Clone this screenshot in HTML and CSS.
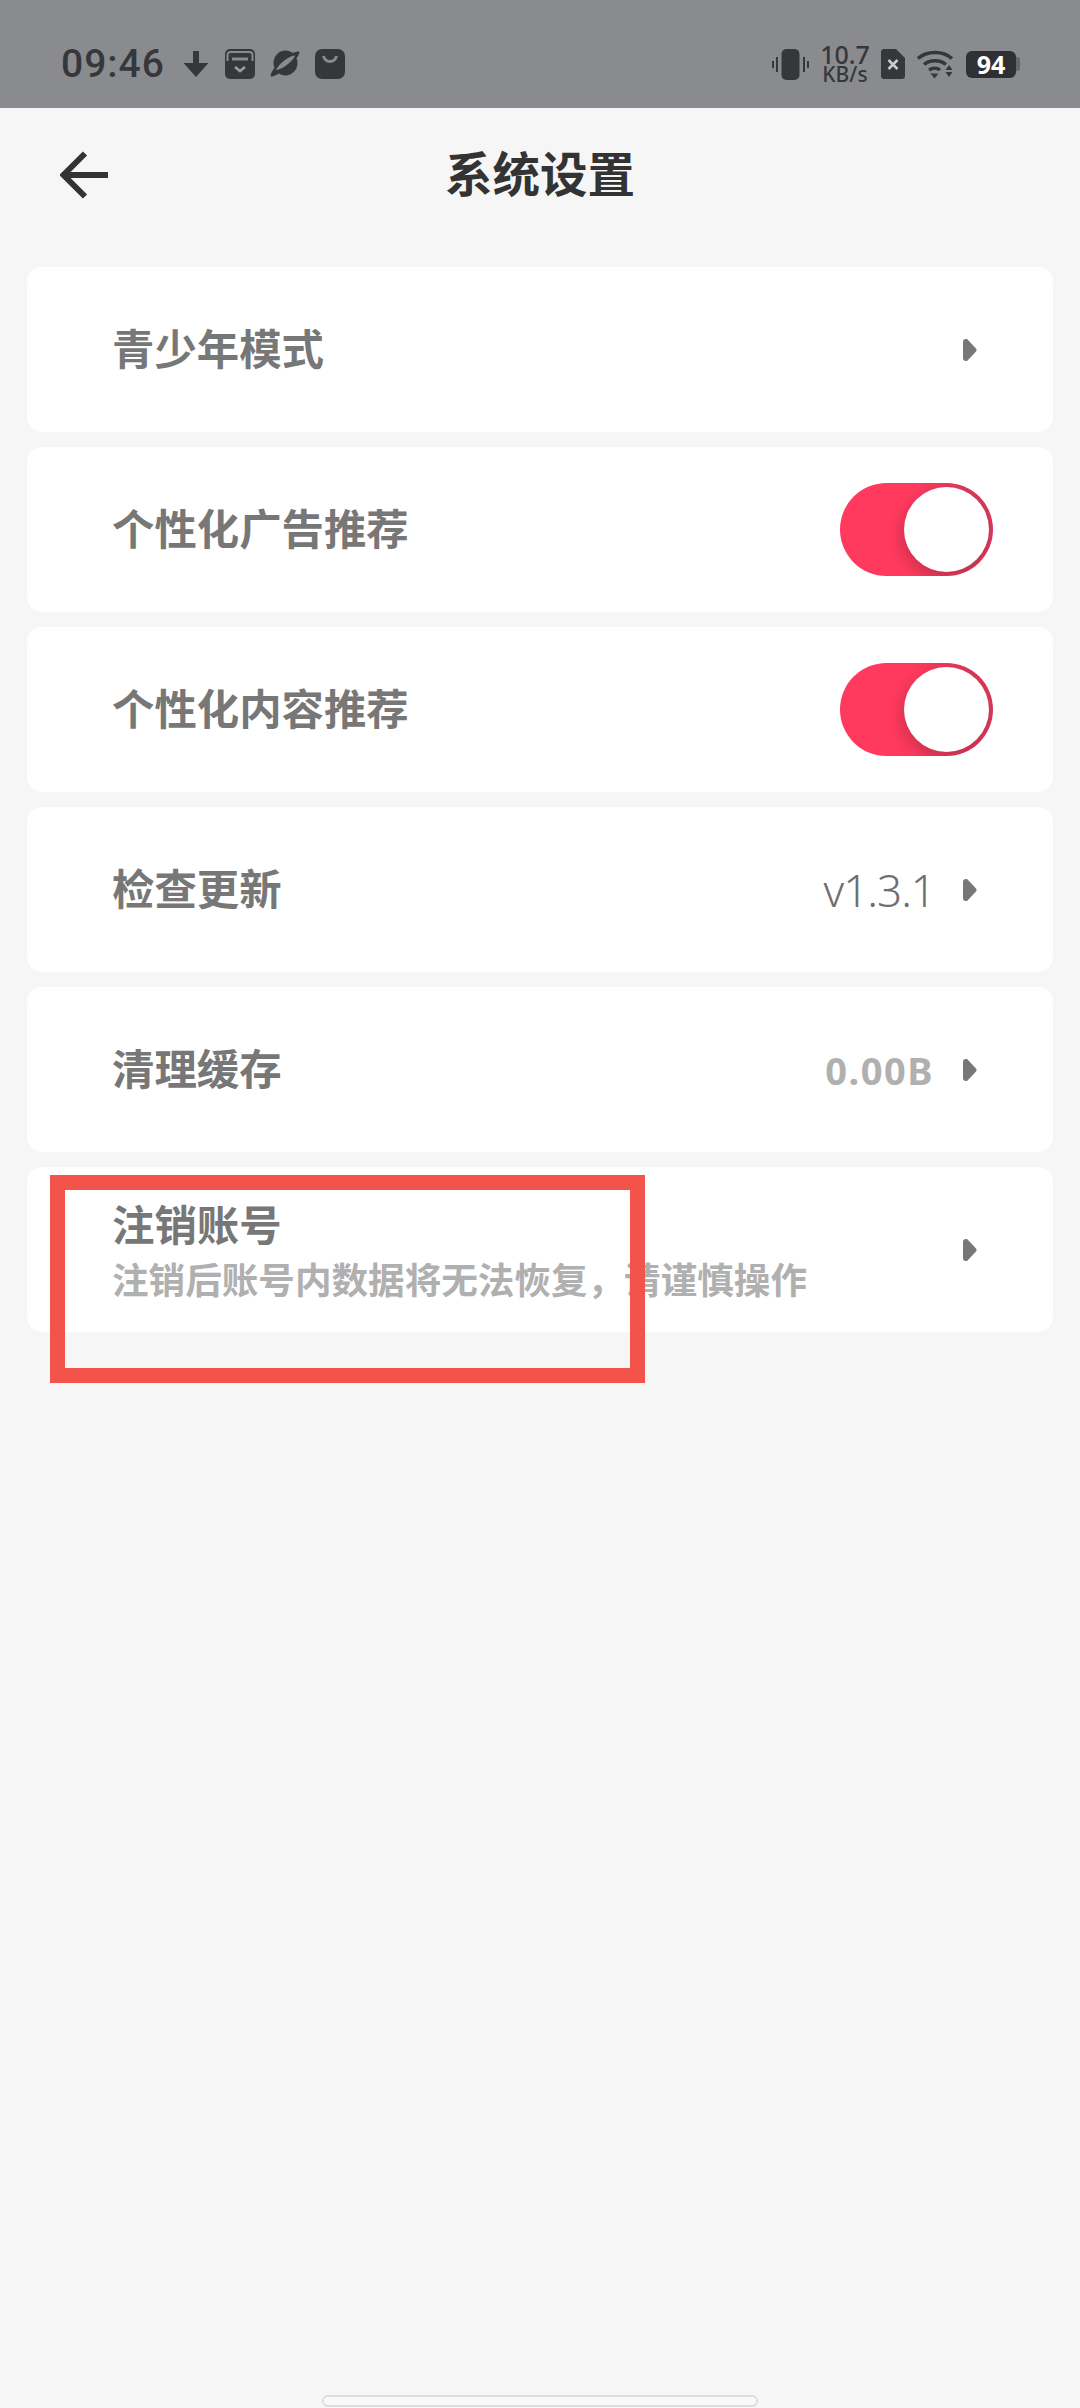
FILE: index.html
```html
<!DOCTYPE html>
<html lang="zh">
<head>
  <meta charset="utf-8">
  <title>系统设置</title>
  <link rel="stylesheet" href="styles.css">
</head>
<body>
  <div class="statusbar">
    <div class="status-left">
      <span class="clock">09:46</span>
      <svg class="ic-down" viewBox="0 0 26 26"><path d="M10 0h6v12h9.500L13 26 .5 12H10z"/></svg>
      <svg class="ic-app" viewBox="0 0 30 30"><rect width="30" height="30" rx="5"/><path d="M2.500 12V6A3 3 0 0 1 5.500 3h19a3 3 0 0 1 3 3v6" fill="none" stroke="#8a8b8f" stroke-width="2"/><path d="M7 8.500h16v3H7z" fill="#8a8b8f"/><path d="M10 18l5 4 5-4" fill="none" stroke="#9a9b9f" stroke-width="2.800"/></svg>
      <svg class="ic-app" viewBox="0 0 30 30"><ellipse cx="15.500" cy="14" rx="12" ry="12.500"/><path d="M1 27.500C-.5 25 4 19 9 14S24 2 29 2.500c1.500 2-3 8-8 13S4 28.500 1 27.500z"/><path d="M6 21C8 16 18 7 25 6.500 24 11 13 20.500 6 21z" fill="#8a8b8f"/></svg>
      <svg class="ic-app" viewBox="0 0 30 30"><path d="M7 0h16a7 7 0 0 1 7 7v16a7 7 0 0 1-7 7H7a7 7 0 0 1-7-7V7a7 7 0 0 1 7-7z"/><path d="M8.500 7c1 4 3.500 5.500 6.500 5.500S20.500 11 21.500 7" fill="none" stroke="#8a8b8f" stroke-width="3"/></svg>
    </div>
    <div class="status-right">
      <svg class="ic-vibrate" viewBox="0 0 37 31"><rect x="9.500" y="0" width="18" height="31" rx="5"/><path d="M5 8v15M1 12v7M32 8v15M36 12v7" fill="none" stroke="#36373b" stroke-width="2"/></svg>
      <div class="netspeed"><span class="net-num">10.7</span><span class="net-unit">KB/s</span></div>
      <svg class="ic-sim" viewBox="0 0 24 30"><path d="M3 0h12l9 9v18a3 3 0 0 1-3 3H3a3 3 0 0 1-3-3V3a3 3 0 0 1 3-3z"/><path d="M7.500 11l9 9M16.500 11l-9 9" stroke="#c9cacc" stroke-width="2.600"/></svg>
      <svg class="ic-wifi" viewBox="0 0 37 29"><path d="M1 8.500C10 .5 26 .5 35 8.500M7 14.500c6-5 16-5 22 0M12 20c3.500-2.500 8-2.500 11 0" fill="none" stroke="#36373b" stroke-width="3.400"/><path d="M13.500 23.500h8L17.500 28.500z"/><path d="M32 15l3.500 5h-7zM28.500 22h7L32 27z"/></svg>
      <div class="battery"><span class="battery-body">94</span><span class="battery-nub"></span></div>
    </div>
  </div>

  <div class="titlebar">
    <svg class="back" viewBox="0 0 48 48"><path d="M48 24H4M25 2.500L3.500 24 25 45.500" fill="none" stroke="#333" stroke-width="6"/></svg>
    <h1>系统设置</h1>
  </div>

  <div class="list">
    <div class="card">
      <span class="label">青少年模式</span>
      <div class="right"><svg class="arrow" viewBox="0 0 14 22"><path d="M3 0c1 0 1.500.4 2.500 1.500l7.500 8c.8.900.8 2.100 0 3l-7.500 8C4.500 21.600 4 22 3 22c-2 0-3-1-3-3V3c0-2 1-3 3-3z"/></svg></div>
    </div>
    <div class="card">
      <span class="label">个性化广告推荐</span>
      <div class="switch"><span class="knob"></span></div>
    </div>
    <div class="card">
      <span class="label">个性化内容推荐</span>
      <div class="switch"><span class="knob"></span></div>
    </div>
    <div class="card">
      <span class="label">检查更新</span>
      <div class="right"><span class="version">v1.3.1</span><svg class="arrow" viewBox="0 0 14 22"><path d="M3 0c1 0 1.500.4 2.500 1.500l7.500 8c.8.900.8 2.100 0 3l-7.500 8C4.500 21.600 4 22 3 22c-2 0-3-1-3-3V3c0-2 1-3 3-3z"/></svg></div>
    </div>
    <div class="card">
      <span class="label">清理缓存</span>
      <div class="right"><span class="cache">0.00B</span><svg class="arrow" viewBox="0 0 14 22"><path d="M3 0c1 0 1.500.4 2.500 1.500l7.500 8c.8.900.8 2.100 0 3l-7.500 8C4.500 21.600 4 22 3 22c-2 0-3-1-3-3V3c0-2 1-3 3-3z"/></svg></div>
    </div>
    <div class="card">
      <div class="stack">
        <span class="label">注销账号</span>
        <span class="sub">注销后账号内数据将无法恢复，请谨慎操作</span>
      </div>
      <div class="right"><svg class="arrow" viewBox="0 0 14 22"><path d="M3 0c1 0 1.500.4 2.500 1.500l7.500 8c.8.900.8 2.100 0 3l-7.500 8C4.500 21.600 4 22 3 22c-2 0-3-1-3-3V3c0-2 1-3 3-3z"/></svg></div>
    </div>
  </div>

  <!-- annotation drawn over the screenshot -->
  <div class="mark"></div>

  <div class="homebar"></div>
</body>
</html>
```

FILE: styles.css
```css
body {
  margin: 0;
  width: 1080px;
  height: 2408px;
  overflow: hidden;
  position: relative;
  display: flex;
  flex-direction: column;
  background-color: #f6f6f6;
  font-family: "Noto Sans CJK SC", "Noto Sans", sans-serif;
}

.statusbar {
  height: 108px;
  padding: 20px 60px 0 61px;
  box-sizing: border-box;
  display: flex;
  align-items: center;
  justify-content: space-between;
  background-color: #8a8b8f;
  color: #36373b;
}

.statusbar svg {
  display: block;
  fill: #36373b;
}

.status-left {
  display: flex;
  align-items: center;
}

.clock {
  font-family: Roboto, sans-serif;
  font-size: 39px;
  font-weight: 500;
  letter-spacing: 1px;
  line-height: 40px;
  width: 122px;
}

.ic-down {
  width: 26px;
  height: 26px;
  margin-right: 16px;
}

.ic-app {
  width: 30px;
  height: 30px;
  margin-right: 15px;
}

.status-right {
  display: flex;
  align-items: center;
}

.ic-vibrate {
  width: 37px;
  height: 31px;
  margin-right: 13px;
}

.netspeed {
  display: flex;
  flex-direction: column;
  align-items: center;
  width: 46px;
  margin-right: 13px;
  font-family: "Noto Sans", sans-serif;
  font-weight: 500;
}

.net-num {
  font-size: 25px;
  line-height: 21px;
}

.net-unit {
  font-size: 21px;
  line-height: 19px;
}

.ic-sim {
  width: 24px;
  height: 30px;
  margin-right: 12px;
}

.ic-wifi {
  width: 37px;
  height: 29px;
  margin-right: 12px;
}

.battery {
  display: flex;
  align-items: center;
}

.battery-body {
  width: 50px;
  height: 27px;
  border-radius: 6px;
  background-color: #2f3034;
  color: #fff;
  font-family: "Noto Sans", sans-serif;
  font-size: 25px;
  font-weight: 700;
  line-height: 27px;
  text-align: center;
}

.battery-nub {
  width: 4px;
  height: 14px;
  border-radius: 0 3px 3px 0;
  background-color: #66676a;
}

.titlebar {
  height: 135px;
  margin-bottom: 24px;
  position: relative;
  display: flex;
  align-items: center;
  justify-content: center;
}

.titlebar h1 {
  margin: 0 0 8px;
  font-size: 47.500px;
  font-weight: 700;
  line-height: 60px;
  color: #333;
}

.back {
  position: absolute;
  left: 60px;
  top: 43px;
  width: 48px;
  height: 48px;
}

.list {
  display: flex;
  flex-direction: column;
  gap: 15px;
  padding: 0 27px;
}

.card {
  height: 165px;
  padding: 0 60px 0 85px;
  box-sizing: border-box;
  display: flex;
  align-items: center;
  justify-content: space-between;
  background-color: #fff;
  border-radius: 15px;
}

.label {
  font-size: 42.400px;
  font-weight: 700;
  line-height: 50px;
  color: #777;
  margin-bottom: 6px;
}

.stack {
  display: flex;
  flex-direction: column;
  gap: 9px;
  margin-top: 4px;
}

.stack .label {
  line-height: 46px;
  margin-bottom: 0;
}

.sub {
  font-size: 36.600px;
  font-weight: 700;
  line-height: 48px;
  color: #b0b0b0;
}

.right {
  display: flex;
  align-items: center;
}

.arrow {
  display: block;
  width: 14px;
  height: 22px;
  fill: #777;
  margin-right: 16px;
}

.version {
  font-family: "Noto Sans", sans-serif;
  font-size: 44px;
  font-weight: 300;
  letter-spacing: -1px;
  color: #6f6f6f;
  margin-right: 28px;
}

.cache {
  font-family: "Noto Sans", sans-serif;
  font-size: 38px;
  font-weight: 700;
  letter-spacing: 1.500px;
  color: #b0b0b0;
  margin-right: 29px;
}

.switch {
  width: 153px;
  height: 93px;
  border-radius: 47px;
  box-sizing: border-box;
  padding: 4px;
  display: flex;
  justify-content: flex-end;
  overflow: hidden;
  background: linear-gradient(90deg, #ff3a5e 0%, #ff3a5e 50%, #d8385a 85%, #d8385a 100%);
}

.knob {
  width: 85px;
  height: 85px;
  border-radius: 50%;
  background-color: #fff;
  box-shadow: -4px 6px 14px rgba(120, 30, 50, 0.3);
}

.mark {
  position: absolute;
  left: 50px;
  top: 1175px;
  width: 595px;
  height: 208px;
  box-sizing: border-box;
  border: 15px solid #f2544c;
}

.homebar {
  width: 436px;
  height: 12px;
  margin: auto auto 1px;
  box-sizing: border-box;
  border: 2px solid #dedede;
  border-radius: 6px;
  background-color: #f9f9f9;
}
```
